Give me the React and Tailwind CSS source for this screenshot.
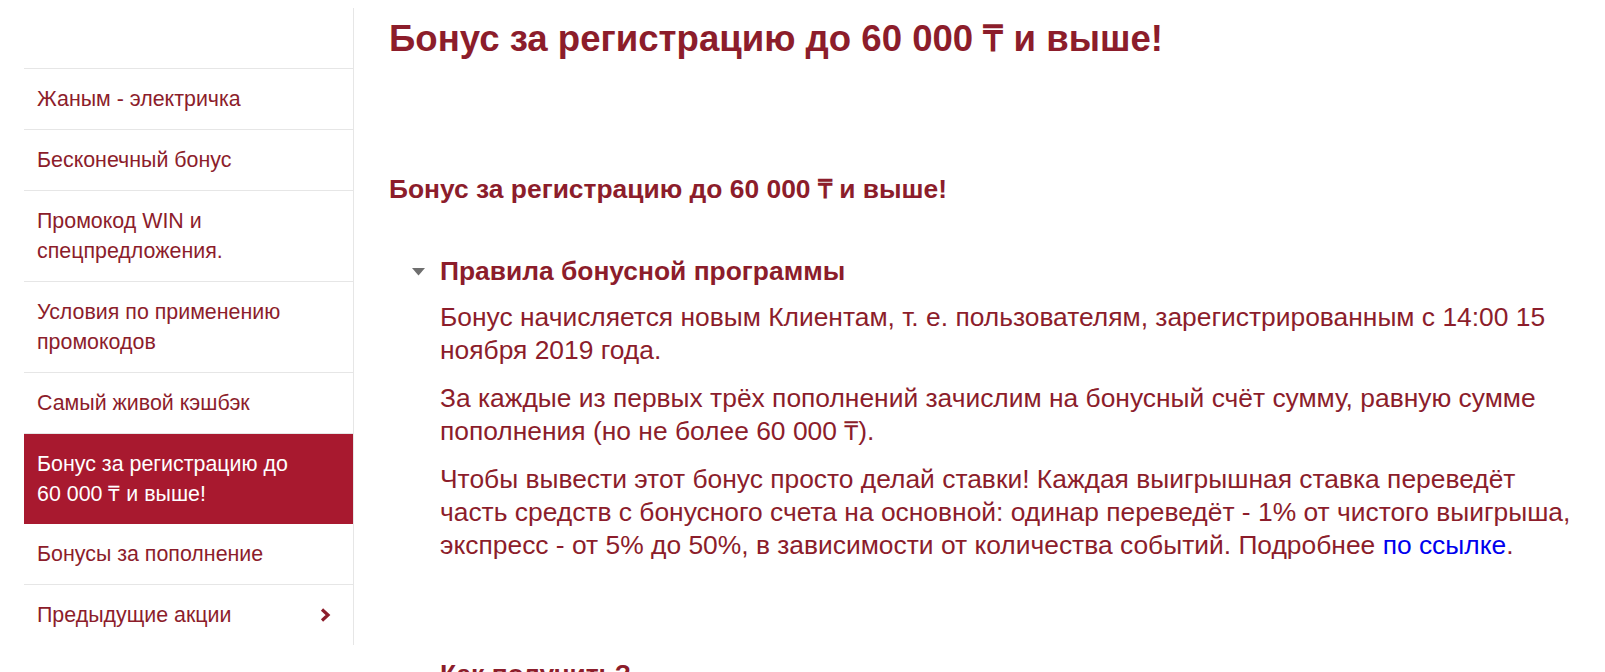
import React from "react";

const items = [
  { label: "Жаным - электричка" },
  { label: "Бесконечный бонус" },
  { label: "Промокод WIN и спецпредложения." },
  { label: "Условия по применению промокодов" },
  { label: "Самый живой кэшбэк" },
  { label: "Бонус за регистрацию до 60 000 ₸ и выше!", active: true },
  { label: "Бонусы за пополнение" },
  { label: "Предыдущие акции", chevron: true },
];

export default function App() {
  return (
    <div className="flex min-h-[672px] bg-white pt-2 font-['Liberation_Sans',Arial,sans-serif] text-[#8c1d2b]">
      <aside className="ml-6 w-[330px] shrink-0 self-start border-r border-[#e6e6e6]">
        <div className="h-[61px] border-b border-[#e6e6e6]" />
        {items.map((it, i) => (
          <div
            key={i}
            className={
              it.active
                ? "flex items-center bg-[#a8192f] py-[15px] pl-[13px] pr-[56px] text-[21.4px] leading-[30px] text-white"
                : i === items.length - 1
                ? "flex items-center py-[15px] pl-[13px] pr-4 text-[21.4px] leading-[30px]"
                : "flex items-center border-b border-[#e6e6e6] py-[15px] pl-[13px] pr-[56px] text-[21.4px] leading-[30px]"
            }
          >
            <span className="flex-1">{it.label}</span>
            {it.chevron && (
              <svg width="12" height="16" viewBox="0 0 12 16" className="mr-[6px]">
                <path d="M3 2.5 L9 8 L3 13.5" fill="none" stroke="#8c1d2b" strokeWidth="3.2" strokeLinecap="butt" strokeLinejoin="miter" />
              </svg>
            )}
          </div>
        ))}
      </aside>
      <main className="ml-[35px] min-w-0 flex-1 pr-[30px]">
        <h1 className="mt-[10px] text-[36.6px] font-bold leading-[41px]">
          Бонус за регистрацию до 60 000 ₸ и выше!
        </h1>
        <h2 className="mt-[115px] text-[26.4px] font-bold leading-[30px]">
          Бонус за регистрацию до 60 000 ₸ и выше!
        </h2>
        <div className="mt-[51px] pl-[51px]">
          <div className="flex items-center text-[26.4px] font-bold leading-[33px]">
            <svg width="13" height="8" viewBox="0 0 13 8" className="-ml-[28px] mr-[15px]">
              <path d="M0 0 L13 0 L6.5 7.5 Z" fill="#6f6f6f" />
            </svg>
            <span>Правила бонусной программы</span>
          </div>
          <div className="mt-[13px] text-[26.4px] leading-[33px]">
            <p>
              Бонус начисляется новым Клиентам, т. е. пользователям, зарегистрированным с 14:00 15 ноября 2019 года.
            </p>
            <p className="mt-[15px]">
              За каждые из первых трёх пополнений зачислим на бонусный счёт сумму, равную сумме пополнения (но не более 60 000 ₸).
            </p>
            <p className="mt-[15px]">
              Чтобы вывести этот бонус просто делай ставки! Каждая выигрышная ставка переведёт часть средств с бонусного счета на основной: одинар переведёт - 1% от чистого выигрыша, экспресс - от 5% до 50%, в зависимости от количества событий. Подробнее{" "}
              <a href="#" className="text-[#0000ee]">по ссылке</a>.
            </p>
          </div>
          <div className="mt-[96px] text-[26.4px] font-bold leading-[33px]">Как получить?</div>
        </div>
      </main>
    </div>
  );
}
